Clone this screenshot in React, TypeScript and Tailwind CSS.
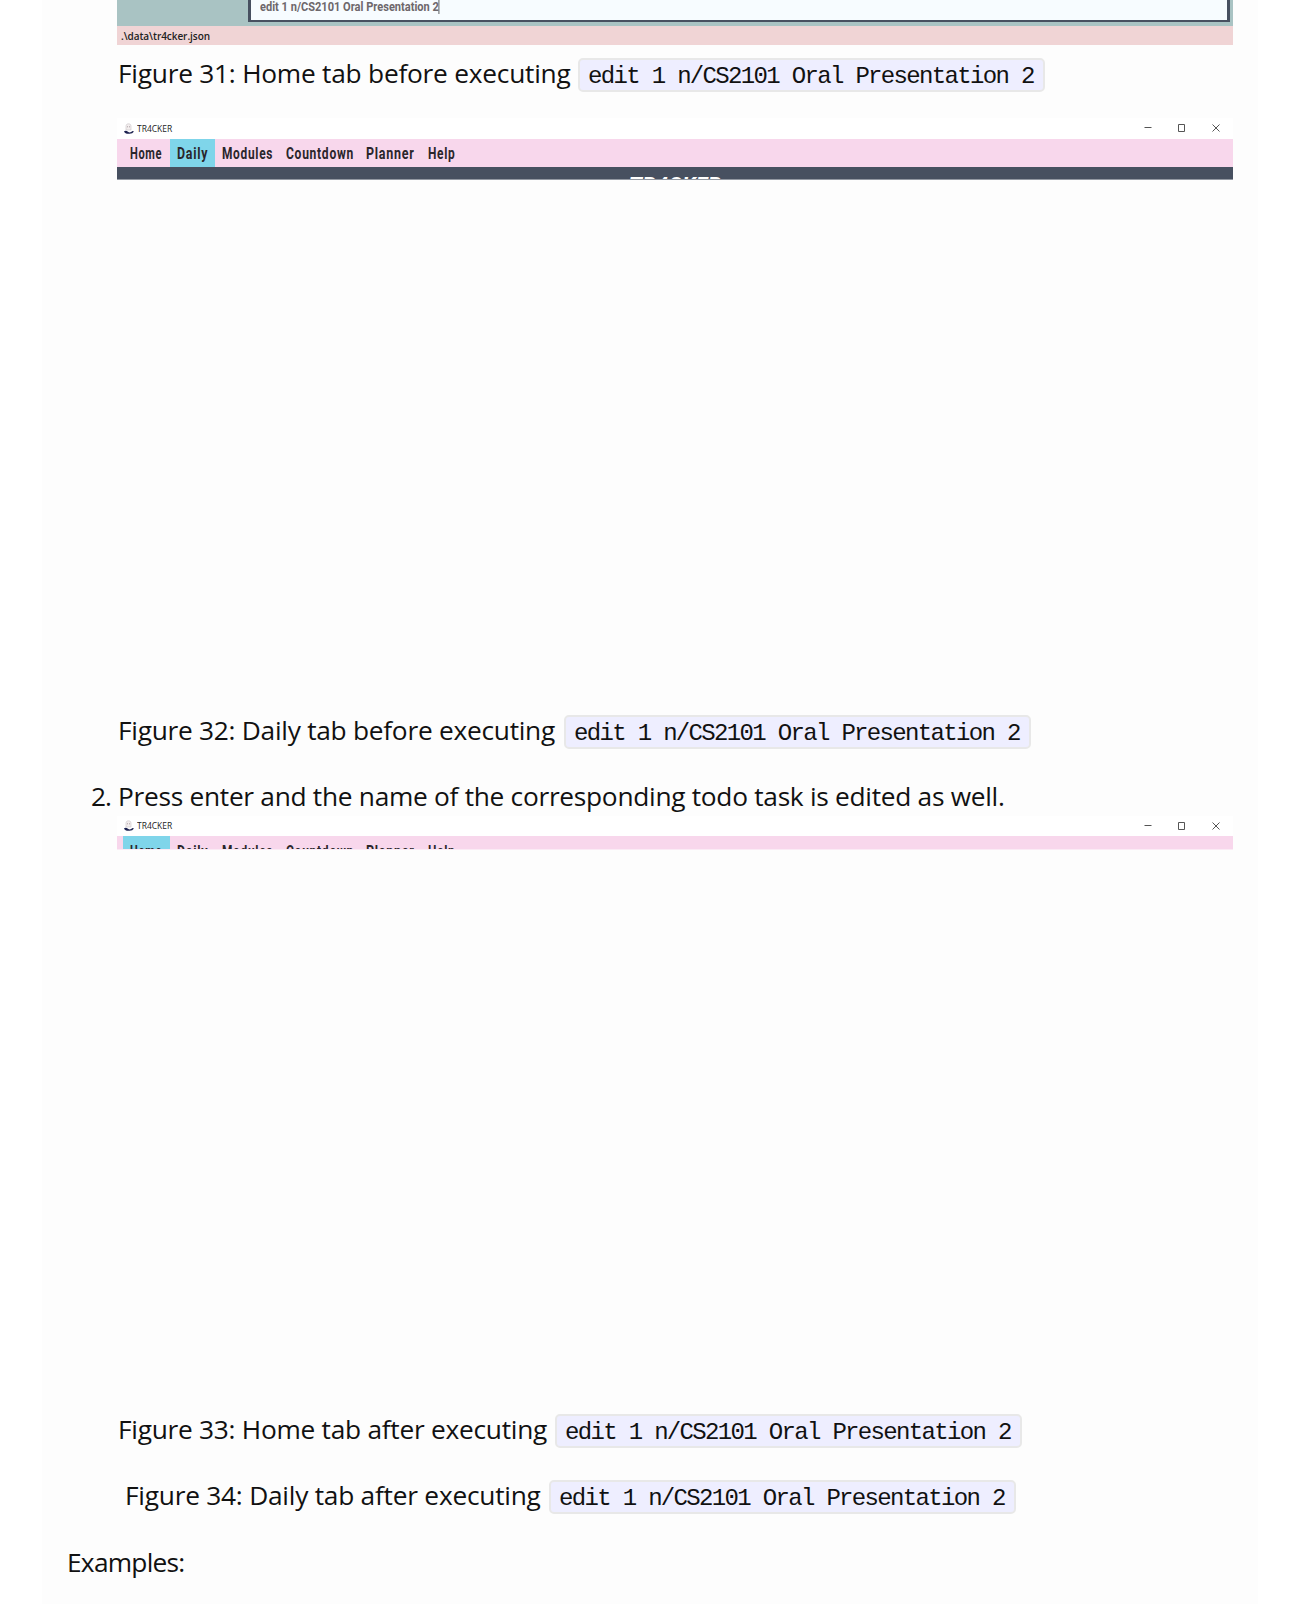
import type { ReactNode } from "react";

const COMMAND = "edit 1 n/CS2101 Oral Presentation 2";

function Command() {
  return (
    <code className="mt-[3px] flex h-[34px] w-[467px] shrink-0 items-center overflow-hidden whitespace-nowrap rounded-[5px] border-2 border-[#e8e8e8] bg-[#eeeeff] pl-[8px] pt-[3px] font-['Liberation_Mono',monospace] text-[24px] leading-[27px] tracking-[-1.67px]">
      {COMMAND}
    </code>
  );
}

function Caption({ children, width }: { children: ReactNode; width: string }) {
  return (
    <p className="flex h-10 items-center whitespace-nowrap leading-10">
      <span className={`${width} shrink-0 pl-px`}>{children}</span>
      <Command />
    </p>
  );
}

function Ghost() {
  return (
    <svg viewBox="0 0 12 12" className="ml-[6px] h-[12px] w-[12px]">
      <path d="M3 7V3.5C3 1.5 4 .8 5.500 .8S8 1.500 8 3.500V7Z" fill="#f3eeee" stroke="#c9c4c8" strokeWidth=".6" />
      <path d="M4.500 3.300v1M6.500 3.300v1" stroke="#8c7f86" strokeWidth=".7" />
      <path d="M1 8.200Q3 7 5 8.700T9.500 8L11 8.500Q9.500 11 6 10.800Q2 11 1 8.200Z" fill="#1d2250" />
    </svg>
  );
}

function TitleBar({ height }: { height: string }) {
  return (
    <div className={`flex ${height} items-center bg-white`}>
      <Ghost />
      <span className="ml-[2px] w-[48px] origin-left scale-x-[0.94] whitespace-nowrap font-['Open_Sans',sans-serif] text-[9px] leading-[12px] text-[#222]">
        TR4CKER
      </span>
      <svg viewBox="0 0 78 10" className="mb-px ml-auto mr-[12px] h-[10px] w-[78px]" fill="none" stroke="#555" strokeWidth="1">
        <path d="M1.500 4.500H8.500" />
        <path d="M35.500 1.500h6v7h-6Z" />
        <path d="M69.500 1.500l7 7M76.500 1.500l-7 7" />
      </svg>
    </div>
  );
}

const TABS = [
  { name: "Home", box: "w-[47px]", scale: "scale-x-[0.65]" },
  { name: "Daily", box: "w-[45px]", scale: "scale-x-[0.73]" },
  { name: "Modules", box: "w-[64px]", scale: "scale-x-[0.7]" },
  { name: "Countdown", box: "w-[80px]", scale: "scale-x-[0.71]" },
  { name: "Planner", box: "w-[62px]", scale: "scale-x-[0.735]" },
  { name: "Help", box: "w-[45px]", scale: "scale-x-[0.7]" },
];

function Tabs({ active, leading }: { active: string; leading: string }) {
  return (
    <nav
      className={`flex h-[28px] bg-[#f8d7ec] pl-[6px] font-['Roboto',sans-serif] text-[17px] font-bold tracking-[1px] text-[#2a262b] ${leading}`}
    >
      {TABS.map((t) => (
        <div key={t.name} className={`${t.box} ${t.name === active ? "bg-[#7fd5ea]" : ""} pl-[7px]`}>
          <span className={`inline-block origin-left ${t.scale}`}>{t.name}</span>
        </div>
      ))}
    </nav>
  );
}

export default function App() {
  return (
    <div className="h-[1604px] overflow-hidden bg-white">
      <main className="ml-[42px] h-full w-[1216px] bg-[#fdfdfd] font-['Open_Sans',sans-serif] text-[26.3px] tracking-[-0.27px] text-[#111]">
        <div className="ml-[75px] w-[1116px]">
          <div className="h-[45px] tracking-normal">
            <div className="h-[26px] bg-[#a9c3c3] pl-[131px] pr-[3px]">
              <div className="h-[22px] border-x-[3px] border-b-2 border-[#475060] bg-[#f7fcff] pl-[9px]">
                <span className="block w-fit origin-left scale-x-[0.85] whitespace-nowrap border-r border-[#444] font-['Roboto',sans-serif] text-[13px] font-bold leading-[14px] text-[#6d676b]">
                  {COMMAND}
                </span>
              </div>
            </div>
            <div className="h-[19px] bg-[#f0d4d5] pl-[4px] font-['Open_Sans',sans-serif] text-[10px] font-semibold leading-[21px] tracking-[-0.05px] text-[#222]">
              .\data\tr4cker.json
            </div>
          </div>

          <div className="mt-2 tracking-[-0.24px]">
            <Caption width="w-[461px]">Figure 31: Home tab before executing</Caption>
          </div>

          <div className="mt-[25px] h-[592px] tracking-normal">
            <TitleBar height="h-[21px]" />
            <Tabs active="Daily" leading="leading-[29px]" />
            <div className="flex h-[13px] justify-center overflow-hidden border-b border-[#9298a2] bg-[#475060]">
              <span className="mt-[8px] font-['Roboto',sans-serif] text-[22px] font-bold italic leading-[22px] text-white">TR4CKER</span>
            </div>
          </div>

          <Caption width="w-[447px]">Figure 32: Daily tab before executing</Caption>

          <p className="-ml-[26px] mt-[26px] flex h-10 whitespace-nowrap leading-10 tracking-[-0.29px]">
            <span className="w-[27px] tracking-[-1px]">2.</span>
            <span>Press enter and the name of the corresponding todo task is edited as well.</span>
          </p>

          <div className="h-[593px] tracking-normal">
            <TitleBar height="h-[20px]" />
            <div className="h-[14px] overflow-hidden border-b border-[#fbebf5]">
              <Tabs active="Home" leading="leading-[31px]" />
            </div>
          </div>

          <Caption width="w-[438px]">Figure 33: Home tab after executing</Caption>
          <div className="ml-[7px] mt-[26px] tracking-[-0.24px]">
            <Caption width="w-[425px]">Figure 34: Daily tab after executing</Caption>
          </div>
        </div>
        <p className="ml-[25px] mt-[27px] h-10 leading-10 tracking-[-0.75px]">Examples:</p>
      </main>
    </div>
  );
}
